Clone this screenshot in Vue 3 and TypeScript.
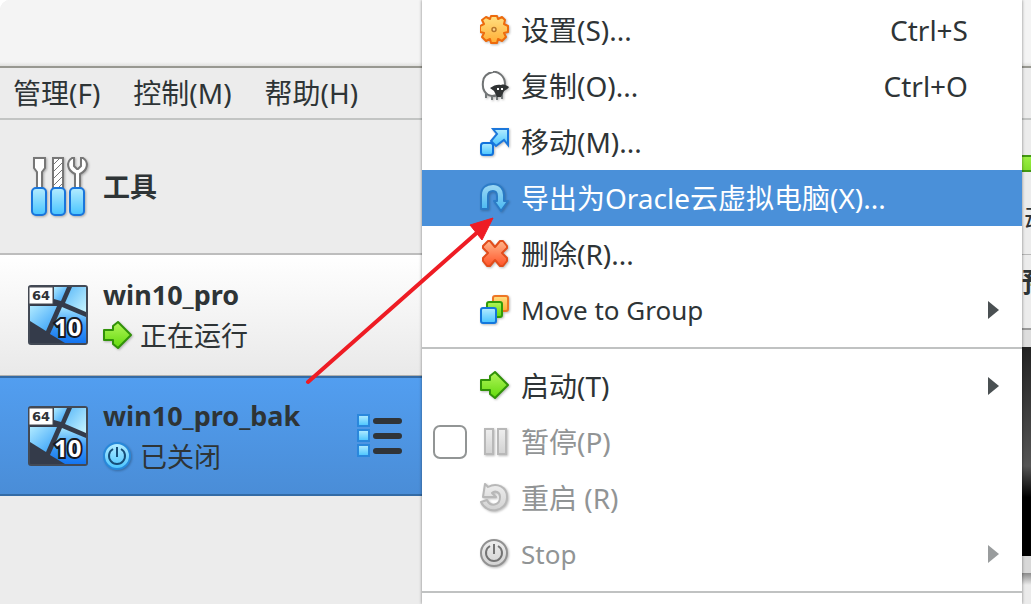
<script setup lang="ts">
interface MenuEntry {
  label: string
  icon: string
  shortcut?: string
  submenu?: boolean
  active?: boolean
  disabled?: boolean
  checkable?: boolean
  latin?: boolean
}

interface Machine {
  name: string
  state: string
  icon: string
  selected: boolean
}

const menus = ['管理(F)', '控制(M)', '帮助(H)']

const machines: Machine[] = [
  { name: 'win10_pro', state: '正在运行', icon: 'start', selected: false },
  { name: 'win10_pro_bak', state: '已关闭', icon: 'power', selected: true },
]

const groups: MenuEntry[][] = [
  [
    { label: '设置(S)...', icon: 'gear', shortcut: 'Ctrl+S' },
    { label: '复制(O)...', icon: 'sheep', shortcut: 'Ctrl+O' },
    { label: '移动(M)...', icon: 'move' },
    { label: '导出为Oracle云虚拟电脑(X)...', icon: 'export', active: true },
    { label: '删除(R)...', icon: 'remove' },
    { label: 'Move to Group', icon: 'group', submenu: true, latin: true },
  ],
  [
    { label: '启动(T)', icon: 'start', submenu: true },
    { label: '暂停(P)', icon: 'pause', disabled: true, checkable: true },
    { label: '重启 (R)', icon: 'reset', disabled: true },
    { label: 'Stop', icon: 'stop', submenu: true, disabled: true, latin: true },
  ],
]
</script>

<template>
  <div class="window">
    <svg class="defs" width="0" height="0" aria-hidden="true">
      <defs>
        <linearGradient id="blue" x1="0" y1="0" x2="0" y2="1"><stop offset="0" stop-color="#b4ecff" /><stop offset="1" stop-color="#48c4ff" /></linearGradient>
        <linearGradient id="green" x1="0" y1="0" x2="0" y2="1"><stop offset="0" stop-color="#b2f55a" /><stop offset="1" stop-color="#62da0c" /></linearGradient>
        <linearGradient id="gold" x1="0" y1="0" x2="0" y2="1"><stop offset="0" stop-color="#ffe082" /><stop offset="1" stop-color="#ffad35" /></linearGradient>
        <linearGradient id="red" x1="0" y1="0" x2="0" y2="1"><stop offset="0" stop-color="#ffb489" /><stop offset="1" stop-color="#ff5429" /></linearGradient>
        <linearGradient id="grey" x1="0" y1="0" x2="0" y2="1"><stop offset="0" stop-color="#eeeeee" /><stop offset="1" stop-color="#d2d2d2" /></linearGradient>
        <linearGradient id="pane" x1="0" y1="0" x2="1" y2="1"><stop offset="0" stop-color="#5ab8f8" /><stop offset="1" stop-color="#c8f5ff" /></linearGradient>
        <linearGradient id="pane-left" x1="0" y1="0" x2="1" y2="1"><stop offset="0" stop-color="#b0eaff" /><stop offset="1" stop-color="#2f9cf8" /></linearGradient>
        <linearGradient id="pane-low" x1="0" y1="0" x2="0" y2="1"><stop offset="0" stop-color="#a4e4ff" /><stop offset="0.5" stop-color="#3c9cf6" /><stop offset="1" stop-color="#1474f0" /></linearGradient>

        <symbol id="i-gear" viewBox="0 0 30 30">
          <path d="M11 1h6l1 3 4-2 3 3-1 4 4 2v6l-4 1 2 4-4 4-4-2-1 4h-6l-1-4-4 2-4-4 2-4-4-1v-6l4-2-2-4 4-3 4 2z" fill="url(#gold)" stroke="#ed6a0c" stroke-width="2" stroke-linejoin="round" />
          <circle cx="14" cy="14.500" r="2" fill="#ffd48a" stroke="#b77528" stroke-width="1.500" />
        </symbol>
        <symbol id="i-sheep" viewBox="0 0 30 30">
          <path d="M13 1C18 0 25 5 25 13c-1 7-5 12-13 12C5 24 2 18 3 11 3 6 7 2 13 1z" fill="#fff" stroke="#707374" stroke-width="2" />
          <path d="M6 22v5M12 25v4M17 24v5M22 22v6" stroke="#74797a" stroke-width="2" />
          <path d="M10 17c4-3 8-4 11-3 3-1 5 0 8 2-2 3-4 3-5 4l-3 6h-4l-3-6z" fill="#303334" />
          <path d="M17 17h2v2h-2zM21 17h2v2h-2z" fill="#fff" />
        </symbol>
        <symbol id="i-move" viewBox="0 0 30 30">
          <path d="M13 2h15v16l-4-5-8 6-5-5 6-7z" fill="url(#blue)" stroke="#1b77db" stroke-width="2" />
          <rect x="1" y="16" width="12" height="12" rx="2.500" fill="url(#blue)" stroke="#1072dc" stroke-width="2" />
        </symbol>
        <symbol id="i-export" viewBox="0 0 30 30">
          <path d="M1 26V12C1 5 6 1 13 1s11 5 11 11v6h4l-7 10-7-10h3v-5c0-3-1-5-4-5s-5 2-5 5v13z" fill="url(#blue)" stroke="#297bc8" stroke-width="2" stroke-linejoin="round" opacity=".85" />
        </symbol>
        <symbol id="i-remove" viewBox="0 0 30 30">
          <path d="M8 2h2l5 6 5-6h3l4 5v2l-5 5 5 5v3l-4 5h-3l-5-6-5 6H7l-4-5v-3l5-5-5-5V7z" fill="url(#red)" stroke="#e24d1c" stroke-width="2" stroke-linejoin="round" />
        </symbol>
        <symbol id="i-group" viewBox="0 0 30 30">
          <rect x="13" y="1" width="15" height="15" rx="2" fill="url(#gold)" stroke="#ed7625" stroke-width="2" />
          <rect x="7" y="7" width="15" height="15" rx="2" fill="url(#green)" stroke="#309b0a" stroke-width="2" />
          <rect x="1" y="13" width="15" height="15" rx="2" fill="url(#blue)" stroke="#1377dd" stroke-width="2" />
        </symbol>
        <symbol id="i-start" viewBox="0 0 30 30">
          <path d="M1 9h9V5l5-4 13 13-13 13-5-4v-4H1z" fill="url(#green)" stroke="#319209" stroke-width="2" stroke-linejoin="round" />
        </symbol>
        <symbol id="i-pause" viewBox="0 0 30 30">
          <path d="M5 2h8v25H5zM18 2h8v25h-8z" fill="url(#grey)" stroke="#b8b8b8" stroke-width="2" />
        </symbol>
        <symbol id="i-reset" viewBox="0 0 30 30">
          <path d="M5 1l3 3c9-5 19 0 19 10 0 15-20 18-26 5l6-2c3 7 13 6 13-3 0-5-5-7-8-4l4 4H3z" fill="url(#grey)" stroke="#b8b8b8" stroke-width="2" stroke-linejoin="round" />
        </symbol>
        <symbol id="i-stop" viewBox="0 0 30 30">
          <circle cx="14" cy="14" r="13" fill="url(#grey)" stroke="#929292" stroke-width="2" />
          <path d="M10 7a8 8 0 1 0 8 0M14 5v10" fill="none" stroke="#747474" stroke-width="2" />
        </symbol>
        <symbol id="i-power" viewBox="0 0 30 30">
          <circle cx="14" cy="14" r="13" fill="url(#blue)" stroke="#2788da" stroke-width="2" />
          <path d="M10 7a8 8 0 1 0 8 0M14 5v10" fill="none" stroke="#164d78" stroke-width="2" />
        </symbol>
      </defs>
    </svg>

    <header class="titlebar"></header>
    <nav class="menubar">
      <button v-for="m in menus" :key="m" type="button">{{ m }}</button>
    </nav>

    <div class="body">
      <aside class="sidebar">
        <button class="tools" type="button">
          <svg class="tools-icon" viewBox="0 0 58 62" aria-hidden="true">
            <g fill="#fff" stroke="#777" stroke-width="2">
              <path d="M3 2h11v10l-3 4v17H6V16l-3-4z" />
              <path d="M22 2h10v31H22z" />
              <path d="M41 2c-6 4-5 12 3 16v15h5V18c8-4 9-12 3-16h-2v8l-3 3h-1l-3-3V2z" />
              <path d="M22 9l7-7M22 16l10-10M22 23l10-10M22 30l10-10M26 33l6-6" stroke-width="1" />
            </g>
            <g fill="url(#blue)" stroke="#1975dc" stroke-width="2">
              <rect x="1" y="32" width="14" height="27" rx="4" />
              <rect x="20" y="32" width="14" height="27" rx="4" />
              <rect x="39" y="32" width="14" height="27" rx="4" />
            </g>
          </svg>
          <strong>工具</strong>
        </button>

        <div v-for="m in machines" :key="m.name" class="machine" :class="{ selected: m.selected }">
          <svg class="os" viewBox="0 0 60 60" aria-hidden="true">
            <rect x="1" y="1" width="58" height="58" rx="2" fill="#343b4a" stroke="#424955" stroke-width="2" />
            <path d="M26 2h13l-6 14-7-2z" fill="url(#pane-left)" />
            <path d="M44 2h14v25L37 18z" fill="url(#pane)" />
            <path d="M2 21h27L18 46 2 36z" fill="url(#pane-left)" />
            <path d="M34 22l24 10v26H37L22 49z" fill="url(#pane-low)" />
            <rect x="1" y="2" width="24" height="17" fill="#fff" stroke="#454850" />
            <text class="bits" x="4" y="15">64</text>
            <text class="release" x="26" y="51">10</text>
          </svg>
          <div class="about">
            <strong>{{ m.name }}</strong>
            <span class="state">
              <svg class="icon" aria-hidden="true"><use :href="`#i-${m.icon}`" /></svg>
              {{ m.state }}
            </span>
          </div>
          <button v-if="m.selected" class="list" type="button" aria-label="Machine tools">
            <svg viewBox="0 0 46 46" aria-hidden="true">
              <g fill="url(#blue)" stroke="#2a87dc" stroke-width="2">
                <rect x="1" y="2" width="11" height="11" />
                <rect x="1" y="17" width="11" height="11" />
                <rect x="1" y="32" width="11" height="11" />
              </g>
              <path d="M19 8h23M19 23h23M19 38h23" stroke="#303438" stroke-width="6" stroke-linecap="round" />
            </svg>
          </button>
        </div>
      </aside>

      <main class="details">
        <button class="launch" type="button"><i class="launch-mark"></i><span>启动</span></button>
        <h2 class="preview-title">预览</h2>
        <div class="preview"></div>
        <div class="below"></div>
      </main>
    </div>

    <div class="context" role="menu">
      <div v-for="(group, g) in groups" :key="g" class="group">
        <div v-for="item in group" :key="item.label" class="row" :class="{ active: item.active, disabled: item.disabled }">
          <input v-if="item.checkable" type="checkbox" :aria-label="item.label" disabled />
          <span v-else></span>
          <button type="button" role="menuitem" :disabled="item.disabled">
            <svg class="icon" aria-hidden="true"><use :href="`#i-${item.icon}`" /></svg>
            <span class="label" :class="{ latin: item.latin }">{{ item.label }}</span>
            <span v-if="item.shortcut" class="shortcut">{{ item.shortcut }}</span>
            <i v-if="item.submenu" class="caret"></i>
          </button>
        </div>
      </div>
    </div>

    <svg class="pointer" width="190" height="172" viewBox="0 0 190 172" aria-hidden="true">
      <path d="M4 168L176 16" stroke="#ee1c24" stroke-width="4" stroke-linecap="round" />
      <path d="M189 4l-23 7 12 15z" fill="#ee1c24" stroke="#ee1c24" />
    </svg>
  </div>
</template>

<style>
body {
  margin: 0;
}
</style>

<style scoped>
.window {
  position: relative;
  display: flex;
  flex-direction: column;
  min-height: 100vh;
  overflow: hidden;
  background: #ececec;
  border-top-left-radius: 10px;
  color: #2e3436;
  font: 28px/36px "Noto Sans", "Noto Sans CJK SC", sans-serif;
}
.window * {
  box-sizing: border-box;
}
.defs {
  position: absolute;
}
button {
  padding: 0;
  border: 0;
  background: none;
  color: inherit;
  font: inherit;
  text-align: left;
}
svg {
  flex: none;
}
.titlebar {
  height: 68px;
  background: linear-gradient(#f4f4f4 94%, #e0e0de);
  border-bottom: 2px solid #989891;
}
.menubar {
  display: flex;
  align-items: center;
  gap: 33px;
  height: 52px;
  padding-left: 13px;
  border-bottom: 2px solid #c2c4c3;
}
.body {
  display: flex;
  flex: 1;
}
.sidebar {
  flex: 0 0 41%;
}
.tools {
  display: flex;
  align-items: center;
  gap: 14px;
  width: 100%;
  height: 135px;
  padding-left: 31px;
  border-bottom: 2px solid #bdbdbd;
}
.tools-icon {
  width: 58px;
  height: 62px;
  filter: drop-shadow(1px 1px 1px #aaa);
}
.machine {
  display: flex;
  align-items: center;
  gap: 15px;
  height: 121px;
  padding: 0 20px 0 28px;
  background: linear-gradient(#fff, #e9e9e9);
  border-bottom: 1px solid #b0b0ae;
}
.machine.selected {
  height: 120px;
  background: linear-gradient(#529ef0, #4a8dd7);
  border-top: 2px solid #346ba5;
  border-bottom: 2px solid #346ba5;
}
.os {
  width: 60px;
  height: 60px;
}
.bits {
  font: 700 13px "DejaVu Sans", sans-serif;
  fill: #303338;
}
.release {
  font: 700 24px "Noto Sans", sans-serif;
  fill: #fff;
  stroke: #17191f;
  stroke-width: 4px;
  paint-order: stroke;
}
.about {
  display: flex;
  flex: 1;
  flex-direction: column;
  gap: 5px;
}
strong {
  font-size: 27px;
}
.state {
  display: flex;
  align-items: center;
  gap: 7px;
  font-size: 27px;
}
.icon {
  width: 30px;
  height: 30px;
  filter: drop-shadow(1px 1px 1px #0004);
}
.list svg {
  display: block;
  width: 46px;
  height: 46px;
}
.details {
  display: flex;
  flex: 1;
  flex-direction: column;
  overflow: hidden;
}
.launch {
  display: flex;
  flex-direction: column;
  justify-content: flex-start;
  height: 135px;
  padding-top: 35px;
  border-bottom: 1px solid #b8b8b8;
}
.launch-mark {
  width: 100%;
  height: 17px;
  margin-bottom: 29px;
  background: linear-gradient(#9bf043, #83df2d);
  border: solid #439912;
  border-width: 2px 0;
}
.launch span {
  align-self: flex-end;
  margin-right: -20px;
  font-size: 27px;
}
.preview-title {
  height: 75px;
  margin: 0 -45px 0 0;
  padding-top: 9px;
  border-bottom: 2px solid #999;
  font-size: 27px;
  text-align: right;
}
.preview {
  height: 226px;
  background: linear-gradient(#222, #555 57%, #000 72%);
  border-top: 17px solid #ddd;
}
.below {
  flex: 1;
  border-top: 17px solid #d8d8d8;
  background: linear-gradient(#8a8a8a, #ebebeb 12px);
}
.context {
  position: absolute;
  top: 0;
  right: 9px;
  bottom: 0;
  width: 600px;
  padding-top: 2px;
  background: #fff;
  box-shadow: 0 0 3px #0007;
  overflow: hidden;
}
.group::after {
  content: "";
  display: block;
  height: 2px;
  margin: 9px 0;
  background: #c0c2c2;
}
.row {
  display: grid;
  grid-template-columns: 34px 1fr;
  align-items: center;
  gap: 13px;
  height: 56px;
  padding: 0 23px 1px 11px;
}
.row button {
  display: flex;
  align-items: center;
  gap: 11px;
}
.row.active {
  background: #4a90d9;
  color: #fff;
}
.row.disabled {
  color: #919495;
}
.label {
  flex: 1;
}
.label.latin {
  font-size: 26px;
}
.shortcut {
  margin-right: 31px;
}
.caret {
  border: solid transparent;
  border-width: 9px 0 9px 11px;
  border-left-color: #4a5052;
}
.disabled .caret {
  border-left-color: #999c9d;
}
input {
  width: 34px;
  height: 34px;
  margin: 0;
  appearance: none;
  background: #fff;
  border: 2px solid #929595;
  border-radius: 7px;
}
.pointer {
  position: absolute;
  top: 214px;
  left: 304px;
}
</style>
